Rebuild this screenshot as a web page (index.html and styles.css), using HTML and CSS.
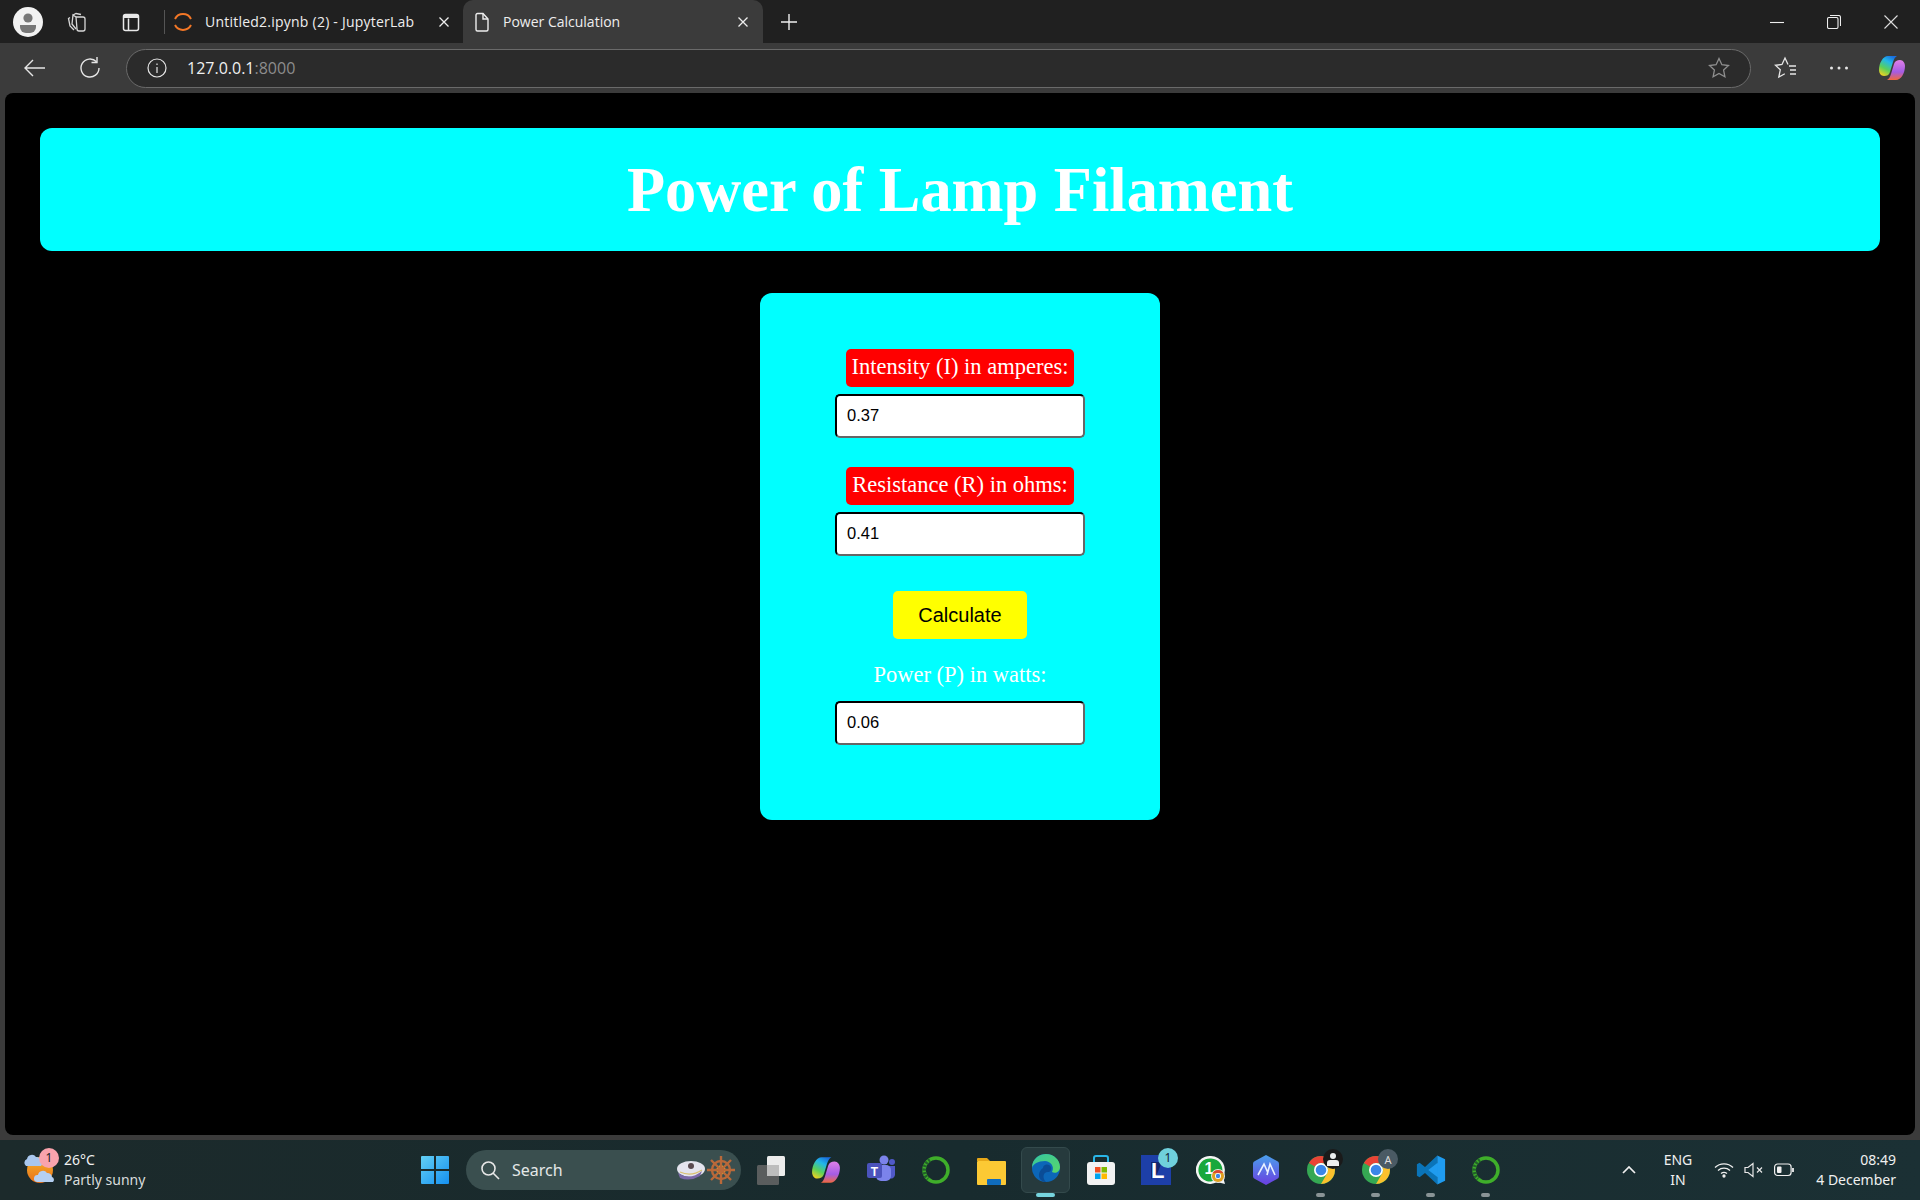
FILE: index.html
```html
<!DOCTYPE html>
<html lang="en">
<head>
<meta charset="utf-8">
<title>Power Calculation</title>
<link rel="stylesheet" href="styles.css">
</head>
<body>
<div class="browser">
  <div class="tabstrip">
    <div class="strip-left">
      <span class="avatar"><svg viewBox="0 0 30 30" width="30" height="30"><circle cx="15" cy="15" r="15" fill="#f2f2f2"/><circle cx="15" cy="11" r="4.6" fill="#777"/><path d="M7 18h16v2a6 6 0 0 1-6 6h-4a6 6 0 0 1-6-6z" fill="#777"/></svg></span>
      <span class="strip-icon"><svg viewBox="0 0 24 24" width="24" height="24" fill="none" stroke="#d8d8d8" stroke-width="1.3"><path d="M11 7h7a2 2 0 0 1 2 2v10a2 2 0 0 1-2 2h-4a2 2 0 0 1-2-2z"/><path d="M8 5l3-1.5 5 1M11 7L8 5l-1 9 4 5M5 7.500l-1.500 1L5 16l4 4"/></svg></span>
      <span class="strip-icon"><svg viewBox="0 0 24 24" width="24" height="24" fill="none" stroke="#e8e8e8" stroke-width="1.500"><rect x="4.500" y="4.500" width="15" height="16" rx="2"/><path d="M9.500 8.500v12"/><path d="M5 5h14v3H5z" fill="#e8e8e8" stroke="none"/></svg></span>
      <span class="strip-sep"></span>
    </div>
    <div class="tab tab-jupyter">
      <svg class="tab-favicon" viewBox="0 0 20 20" width="20" height="20" fill="none" stroke="#f37726" stroke-width="2"><path d="M2 7a9 9 0 0 1 16 0"/><path d="M2 13a9 9 0 0 0 16 0"/></svg>
      <span class="tab-title">Untitled2.ipynb (2) - JupyterLab</span>
      <svg class="tab-close" viewBox="0 0 12 12" width="12" height="12" stroke="#eee" stroke-width="1.300"><path d="M1.500 1.500l9 9M10.500 1.500l-9 9"/></svg>
    </div>
    <div class="tab tab-active">
      <svg class="tab-favicon" viewBox="0 0 20 20" width="20" height="20" fill="none" stroke="#eee" stroke-width="1.400"><path d="M4 3a1.500 1.500 0 0 1 1.500-1.500H11L16 7v10.500A1.500 1.500 0 0 1 14.500 19h-9A1.500 1.500 0 0 1 4 17.500z"/><path d="M11 1.500V7h5"/></svg>
      <span class="tab-title">Power Calculation</span>
      <svg class="tab-close" viewBox="0 0 12 12" width="12" height="12" stroke="#eee" stroke-width="1.300"><path d="M1.500 1.500l9 9M10.500 1.500l-9 9"/></svg>
    </div>
    <span class="newtab"><svg viewBox="0 0 18 18" width="18" height="18" stroke="#eee" stroke-width="1.400"><path d="M9 1v16M1 9h16"/></svg></span>
    <div class="window-controls">
      <svg viewBox="0 0 14 14" width="14" height="14" stroke="#eee" stroke-width="1.100"><path d="M0 7.500h14"/></svg>
      <svg viewBox="0 0 14 14" width="14" height="14" fill="none" stroke="#eee" stroke-width="1.100"><rect x="0.500" y="2.500" width="10.500" height="11" rx="1.500"/><path d="M3 .5h8.500a2 2 0 0 1 2 2V11"/></svg>
      <svg viewBox="0 0 14 14" width="14" height="14" stroke="#ddd" stroke-width="1.100"><path d="M.5.500l13 13M13.500.5l-13 13"/></svg>
    </div>
  </div>
  <div class="toolbar">
    <span class="tool-btn first"><svg viewBox="0 0 24 24" width="24" height="24" fill="none" stroke="#e6e6e6" stroke-width="1.400"><path d="M23 12H3M11 4l-8 8 8 8"/></svg></span>
    <span class="tool-btn"><svg viewBox="0 0 24 24" width="24" height="24" fill="none" stroke="#e6e6e6" stroke-width="1.400"><path d="M18.500 5.800A9 9 0 1 0 21 12"/><path d="M19 1v5.500h-5.500"/></svg></span>
    <div class="addressbar">
      <svg viewBox="0 0 20 20" width="20" height="20" fill="none" stroke="#e6e6e6" stroke-width="1.200"><circle cx="10" cy="10" r="9"/><path d="M10 9v6M10 5.500v1.500"/></svg>
      <span class="url"><span class="url-host">127.0.0.1</span><span class="url-port">:8000</span></span>
      <svg class="addr-star" viewBox="0 0 22 22" width="22" height="22" fill="none" stroke="#8f8f8f" stroke-width="1.300"><path d="M11 1.500l2.900 6.200 6.600.8-4.900 4.600 1.300 6.700-5.900-3.300-5.900 3.300 1.300-6.700L1.500 8.500l6.600-.8z"/></svg>
    </div>
    <span class="tool-right">
      <svg viewBox="0 0 24 24" width="24" height="24" fill="none" stroke="#e6e6e6" stroke-width="1.300"><path d="M15 8.500l-3-6.500-3 6.500-6.500.8 4.800 4.500L5.800 21l6-3.200M16 10h7M17 14h6M17 18h6"/></svg>
      <svg class="dots" viewBox="0 0 20 4" width="20" height="4" fill="#e6e6e6"><circle cx="2.500" cy="2" r="1.500"/><circle cx="10" cy="2" r="1.500"/><circle cx="17.500" cy="2" r="1.500"/></svg>
      <svg viewBox="0 0 28 28" width="28" height="28"><defs><linearGradient id="cpA" x1=".7" y1="0" x2=".2" y2="1"><stop offset="0" stop-color="#1a6fe0"/><stop offset=".3" stop-color="#22b8e8"/><stop offset=".65" stop-color="#5ad05a"/><stop offset="1" stop-color="#f5d020"/></linearGradient><linearGradient id="cpB" x1=".5" y1="0" x2=".5" y2="1"><stop offset="0" stop-color="#e080e8"/><stop offset=".6" stop-color="#a45ce4"/><stop offset="1" stop-color="#f2683c"/></linearGradient></defs><path d="M10 2h9c-2 1-3 3-4 6l-3 10c-1 3-3 4-6 4-3 0-5-3-5-6 0-7 4-14 9-14z" fill="url(#cpA)"/><path d="M18 26H9c2-1 3-3 4-6l3-10c1-3 3-4 6-4 3 0 5 3 5 6 0 7-4 14-9 14z" fill="url(#cpB)"/></svg>
    </span>
  </div>
  <main class="viewport">
    <header class="banner"><h1>Power of Lamp Filament</h1></header>
    <form class="card">
      <label class="field-label" for="intensity">Intensity (I) in amperes:</label>
      <input class="field" id="intensity" type="text" value="0.37">
      <label class="field-label second" for="resistance">Resistance (R) in ohms:</label>
      <input class="field" id="resistance" type="text" value="0.41">
      <button class="calc" type="button">Calculate</button>
      <label class="result-label" for="power">Power (P) in watts:</label>
      <input class="field" id="power" type="text" value="0.06">
    </form>
  </main>
  <footer class="taskbar">
    <div class="weather">
      <span class="weather-icon">
        <svg viewBox="0 0 34 36" width="34" height="36"><defs><linearGradient id="sun" x1="0" y1="0" x2="0" y2="1"><stop offset="0" stop-color="#f7b32a"/><stop offset="1" stop-color="#e8701a"/></linearGradient></defs><circle cx="16" cy="18" r="13" fill="url(#sun)"/><path d="M2 14a4 4 0 0 1 1-7 5 5 0 0 1 9-2 4.500 4.500 0 0 1 5 4.500 3 3 0 0 1 0 4.500z" fill="#a9c7ee"/><path d="M13 30a3.500 3.500 0 0 1 1-7 5 5 0 0 1 9-2 4.500 4.500 0 0 1 5 4 3 3 0 0 1 1 5z" fill="#b5d0f2"/></svg>
        <span class="weather-badge">1</span>
      </span>
      <span class="weather-text"><span class="weather-temp">26°C</span><span class="weather-desc">Partly sunny</span></span>
    </div>
    <div class="task-center">
      <span class="task-item start"><svg viewBox="0 0 30 30" width="30" height="30"><defs><linearGradient id="win" x1="0" y1="0" x2="1" y2="1"><stop offset="0" stop-color="#63d0f5"/><stop offset="1" stop-color="#1590f0"/></linearGradient></defs><path d="M1 2a1 1 0 0 1 1-1h12v13H1zM16 1h12a1 1 0 0 1 1 1v12H16zM1 16h13v13H2a1 1 0 0 1-1-1zM16 16h13v12a1 1 0 0 1-1 1H16z" fill="url(#win)"/></svg></span>
      <div class="searchbox">
        <svg viewBox="0 0 20 20" width="20" height="20" fill="none" stroke="#e8e8e8" stroke-width="1.600"><circle cx="8.500" cy="8.500" r="6.500"/><path d="M13 13l6 6"/></svg>
        <span class="search-text">Search</span>
        <span class="search-art">
          <svg viewBox="0 0 30 22" width="30" height="22"><ellipse cx="15" cy="10" rx="14" ry="8" fill="#e4e4ee"/><path d="M2 14q12 8 24-2l-2 5q-10 6-20 2z" fill="#7a68a8"/><path d="M4 13q11 5 22-2" fill="none" stroke="#d8c070" stroke-width="1.200"/><circle cx="15" cy="7" r="3" fill="#5a4a50"/></svg>
          <svg viewBox="0 0 30 30" width="30" height="30" fill="none" stroke="#b9693a" stroke-width="2.400"><circle cx="15" cy="15" r="9"/><circle cx="15" cy="15" r="3.500" stroke="#d8a030"/><path d="M15 1v28M1 15h28M5 5l20 20M25 5L5 25"/></svg>
        </span>
      </div>
      <span class="task-item"><svg viewBox="0 0 30 30" width="30" height="30"><rect x="11" y="1" width="18" height="20" rx="1.500" fill="#ececec"/><rect x="1" y="10" width="22" height="20" rx="1.500" fill="#666" fill-opacity=".85"/><rect x="11" y="10" width="12" height="11" fill="#bdbdbd"/></svg></span>
      <span class="task-item"><svg viewBox="0 0 28 28" width="30" height="30"><defs><linearGradient id="cpC" x1=".7" y1="0" x2=".2" y2="1"><stop offset="0" stop-color="#1a6fe0"/><stop offset=".3" stop-color="#22b8e8"/><stop offset=".65" stop-color="#5ad05a"/><stop offset="1" stop-color="#f5d020"/></linearGradient><linearGradient id="cpD" x1=".5" y1="0" x2=".5" y2="1"><stop offset="0" stop-color="#e080e8"/><stop offset=".6" stop-color="#a45ce4"/><stop offset="1" stop-color="#f2683c"/></linearGradient></defs><path d="M10 2h9c-2 1-3 3-4 6l-3 10c-1 3-3 4-6 4-3 0-5-3-5-6 0-7 4-14 9-14z" fill="url(#cpC)"/><path d="M18 26H9c2-1 3-3 4-6l3-10c1-3 3-4 6-4 3 0 5 3 5 6 0 7-4 14-9 14z" fill="url(#cpD)"/></svg></span>
      <span class="task-item"><svg viewBox="0 0 30 30" width="30" height="30"><circle cx="18" cy="5" r="4.500" fill="#7b83eb"/><circle cx="26" cy="7" r="3" fill="#5059c9"/><path d="M22 11h7v9a4 4 0 0 1-6 3z" fill="#5059c9"/><rect x="10" y="10" width="15" height="16" rx="5" fill="#7b83eb"/><rect x="1" y="8" width="15" height="15" rx="2" fill="#4b53bc"/><text class="ms-t" x="8.500" y="20.500">T</text></svg></span>
      <span class="task-item"><svg viewBox="0 0 30 30" width="30" height="30" fill="none"><circle cx="15" cy="15" r="12" stroke="#3fae2a" stroke-width="3.500"/><path d="M9 5a12 12 0 0 0-2 19" stroke="#22602a" stroke-width="4" stroke-dasharray="2 1.500"/></svg></span>
      <span class="task-item"><svg viewBox="0 0 30 30" width="30" height="30"><path d="M1 4a1 1 0 0 1 1-1h9l3 3h-13z" fill="#e8a818"/><rect x="1" y="6" width="29" height="24" rx="1" fill="#fcc934"/><rect x="11" y="24" width="14" height="6" rx="1" fill="#0f6cbd"/></svg></span>
      <span class="task-item active-item"><svg viewBox="0 0 30 30" width="30" height="30"><defs><linearGradient id="edg" x1="0" y1="0" x2="1" y2="1"><stop offset="0" stop-color="#35c6a0"/><stop offset="1" stop-color="#58d66a"/></linearGradient></defs><circle cx="15" cy="15" r="14" fill="#0c66b8"/><path d="M1 15C1 5 9 1 15 1c8 0 14 6 14 13 0 5-5 7-8 5 3-6-2-11-7-11C7 8 2 11 1 15z" fill="url(#edg)"/><path d="M12 15c0-4 6-5 8-1 1 3-1 5-3 5-5 0-6 6-2 10-7 0-10-9-3-14z" fill="#0a4c96"/></svg></span>
      <span class="task-item"><svg viewBox="0 0 30 32" width="30" height="32"><rect x="1" y="8" width="28" height="23" rx="3" fill="#f2f2f2"/><path d="M8 8V4a2 2 0 0 1 2-2h10a2 2 0 0 1 2 2v4" fill="none" stroke="#29b6e8" stroke-width="2"/><rect x="9" y="13" width="5.500" height="5.500" fill="#f25022"/><rect x="15.500" y="13" width="5.500" height="5.500" fill="#7fba00"/><rect x="9" y="19.500" width="5.500" height="5.500" fill="#00a4ef"/><rect x="15.500" y="19.500" width="5.500" height="5.500" fill="#ffb900"/></svg></span>
      <span class="task-item"><svg viewBox="0 0 30 30" width="30" height="30"><rect width="30" height="30" fill="#1d3fa8"/><path d="M10 24l6-5 5-12-11 0z" fill="#12266e"/><text class="l-mark" x="10" y="23">L</text></svg><span class="l-badge">1</span></span>
      <span class="task-item"><svg viewBox="0 0 30 30" width="30" height="30"><path d="M15 1a14 14 0 0 1 12 21l2 7-8-2A14 14 0 1 1 15 1z" fill="#f4f4f4"/><path d="M15 3.500a11.500 11.500 0 0 1 10 17l1 5-5-1.500A11.500 11.500 0 1 1 15 3.500z" fill="#19a83c"/><text class="wa-one" x="13" y="19">1</text><circle cx="22" cy="21" r="7" fill="#e8e8e8"/><circle cx="22" cy="21" r="6" fill="#e0a020"/><path d="M16.800 18a6 6 0 0 1 10.400 0H22z" fill="#d94a32"/><circle cx="22" cy="21" r="3" fill="#fff"/><circle cx="22" cy="21" r="2.200" fill="#3a86e8"/></svg></span>
      <span class="task-item"><svg viewBox="0 0 30 32" width="30" height="32"><defs><linearGradient id="arc" x1="0" y1="0" x2="0" y2="1"><stop offset="0" stop-color="#4aa0ec"/><stop offset="1" stop-color="#6a3ee0"/></linearGradient></defs><path d="M15 1l11 6a3 3 0 0 1 2 3v12a3 3 0 0 1-2 3l-11 6-11-6a3 3 0 0 1-2-3V10a3 3 0 0 1 2-3z" fill="url(#arc)"/><path d="M7 21l6-11 4 9M16 21l3-11 5 11" fill="none" stroke="#e8f0ff" stroke-width="1.600"/></svg></span>
      <span class="task-item with-dot"><svg viewBox="0 0 30 30" width="30" height="30"><circle cx="15" cy="15" r="14" fill="#35a853"/><path d="M15 1a14 14 0 0 1 12.100 7H15a7 7 0 0 0-6.100 3.500L2.900 8A14 14 0 0 1 15 1z" fill="#ea4335"/><path d="M27.100 8A14 14 0 0 1 15 29l6.100-10.500A7 7 0 0 0 15 8z" fill="#fbc02d"/><circle cx="15" cy="15" r="7" fill="#fff"/><circle cx="15" cy="15" r="5.300" fill="#3a86e8"/></svg><span class="chrome-badge dark"><svg viewBox="0 0 12 14" width="12" height="14" fill="#eee"><circle cx="6" cy="4" r="3"/><path d="M0 14V11a3 3 0 0 1 3-3h6a3 3 0 0 1 3 3v3z"/></svg></span></span>
      <span class="task-item with-dot"><svg viewBox="0 0 30 30" width="30" height="30"><circle cx="15" cy="15" r="14" fill="#35a853"/><path d="M15 1a14 14 0 0 1 12.100 7H15a7 7 0 0 0-6.100 3.500L2.900 8A14 14 0 0 1 15 1z" fill="#ea4335"/><path d="M27.100 8A14 14 0 0 1 15 29l6.100-10.500A7 7 0 0 0 15 8z" fill="#fbc02d"/><circle cx="15" cy="15" r="7" fill="#fff"/><circle cx="15" cy="15" r="5.300" fill="#3a86e8"/></svg><span class="chrome-badge slate">A</span></span>
      <span class="task-item with-dot"><svg viewBox="0 0 100 100" width="30" height="30"><path d="M71 2L30 40 12 26 3 31v38l9 5 18-14 41 38z" fill="#0a74b8"/><path d="M71 2l26 12v72L71 98zM71 27L41 50l30 23z" fill="#1f9cf0" fill-rule="evenodd"/></svg></span>
      <span class="task-item with-dot"><svg viewBox="0 0 30 30" width="30" height="30" fill="none"><circle cx="15" cy="15" r="12" stroke="#3fae2a" stroke-width="3.500"/><path d="M9 5a12 12 0 0 0-2 19" stroke="#22602a" stroke-width="4" stroke-dasharray="2 1.500"/></svg></span>
    </div>
    <div class="tray">
      <svg class="chevron" viewBox="0 0 14 8" width="14" height="8" fill="none" stroke="#f0f0f0" stroke-width="1.700"><path d="M1 7l6-6 6 6"/></svg>
      <span class="lang"><span>ENG</span><span>IN</span></span>
      <span class="tray-icons">
        <svg viewBox="0 0 20 16" width="20" height="16" fill="none" stroke="#f0f0f0" stroke-width="1.300"><path d="M1 5.500a13 13 0 0 1 18 0M4 8.500a9 9 0 0 1 12 0M7 11.500a5 5 0 0 1 6 0"/><circle cx="10" cy="14" r="1" fill="#f0f0f0"/></svg>
        <svg viewBox="0 0 20 16" width="20" height="16" fill="none" stroke="#e8e8e8" stroke-width="1.200"><path d="M1 5.500h3l5-4v13l-5-4H1z"/><path d="M13 5.500l5 5M18 5.500l-5 5"/></svg>
        <svg viewBox="0 0 20 14" width="20" height="14" fill="none" stroke="#f0f0f0" stroke-width="1.200"><rect x=".6" y="1" width="16.500" height="11.500" rx="3"/><rect x="3" y="3.500" width="4.500" height="6.500" rx="1" fill="#f0f0f0" stroke="none"/><path d="M19 5v4" stroke-width="1.800"/></svg>
      </span>
      <span class="clock"><span>08:49</span><span>4 December</span></span>
    </div>
  </footer>
</div>
</body>
</html>
```

FILE: styles.css
```css
* { box-sizing: border-box; }
html, body { margin: 0; height: 100%; }
body { background: #000; overflow: hidden; font-family: "Noto Sans", "Open Sans", sans-serif; }
.browser { width: 1920px; height: 1200px; display: flex; flex-direction: column; background: #3b3b3b; }

.tabstrip { height: 43px; flex: none; background: #202020; display: flex; align-items: stretch; color: #eee; font-size: 14px; }
.strip-left { display: flex; align-items: center; width: 165px; flex: none; padding-left: 13px; }
.avatar { width: 30px; height: 30px; margin-right: 22px; display: flex; }
.strip-icon { width: 24px; height: 24px; margin-right: 30px; display: flex; }
.strip-icon + .strip-icon { margin-right: 21px; }
.strip-sep { width: 1px; height: 24px; background: #555; }
.tab { display: flex; align-items: center; flex: none; }
.tab-jupyter { width: 298px; padding: 0 10px 0 8px; }
.tab-favicon { flex: none; }
.tab-jupyter .tab-favicon { margin-right: 12px; }
.tab-active .tab-favicon { margin-right: 11px; }
.tab-title { flex: 1; white-space: nowrap; overflow: hidden; font-family: "Open Sans", "Noto Sans", sans-serif; font-size: 14px; }
.tab-jupyter .tab-title { letter-spacing: 0.23px; }
.tab-close { flex: none; margin-right: 3px; }
.tab-active { width: 300px; padding: 0 11px 0 9px; background: #3b3b3b; border-radius: 10px 10px 0 0; }
.newtab { width: 52px; display: flex; align-items: center; justify-content: center; flex: none; }
.window-controls { margin-left: auto; display: flex; align-items: center; gap: 43px; padding-right: 22px; }

.toolbar { height: 50px; flex: none; display: flex; align-items: center; background: #3b3b3b; }
.tool-btn { width: 24px; height: 24px; display: flex; margin-left: 32px; flex: none; }
.tool-btn.first { margin-left: 22px; }
.addressbar { width: 1625px; height: 39px; margin-left: 24px; flex: none; border: 1px solid #6a6a6a; border-radius: 20px; background: #2b2b2b; display: flex; align-items: center; padding: 0 20px 0 20px; }
.url { font-family: "Open Sans", "Noto Sans", sans-serif; font-size: 16px; margin-left: 20px; }
.url-host { color: #f0f0f0; }
.url-port { color: #8d8d8d; }
.addr-star { margin-left: auto; }
.tool-right { display: flex; align-items: center; margin-left: 22px; flex: none; }
.dots { margin-left: 32px; margin-right: 29px; }

.viewport { flex: 1; margin: 0 5px 5px; background: #000; border-radius: 8px; padding: 35px 35px 0; display: flex; flex-direction: column; align-items: center; min-height: 0; }
.banner { align-self: stretch; height: 123px; background: #0ff; border-radius: 12px; display: flex; align-items: center; justify-content: center; }
.banner h1 { margin: 0; font-family: "Liberation Serif", serif; font-weight: 700; font-size: 62.400px; color: #fff; }

.card { width: 400px; height: 527px; margin-top: 42px; background: #0ff; border-radius: 12px; padding-top: 56px; display: flex; flex-direction: column; align-items: center; font-family: "Liberation Serif", serif; }
.field-label { background: #f00; color: #fff; font-size: 22.500px; height: 38px; line-height: 36px; padding: 0 6px; border-radius: 5px; }
.field-label.second { margin-top: 29px; }
.field { width: 250px; height: 44px; margin-top: 7px; border-width: 2px; border-style: inset; border-color: #222 #666 #666 #222; border-radius: 5px; background: #fff; padding: 0 10px 2px; font-family: "Liberation Sans", sans-serif; font-size: 16.500px; color: #000; }
.calc { width: 134px; height: 48px; margin-top: 35px; border: 0; border-radius: 5px; background: #ff0; font-family: "Liberation Sans", sans-serif; font-size: 20px; color: #000; padding: 0; }
.result-label { color: #fff; font-size: 22.500px; line-height: 38px; margin-top: 17px; }
.result-label + .field { margin-top: 7px; }

.taskbar { height: 60px; flex: none; background: linear-gradient(90deg, #1c2a2b, #182b2e 50%, #1b3034); display: flex; align-items: center; position: relative; color: #f0f0f0; }
.weather { display: flex; align-items: center; margin-left: 24px; width: 180px; flex: none; }
.weather-icon { width: 36px; height: 36px; position: relative; display: flex; flex: none; }
.weather-badge { position: absolute; left: 15px; top: -4px; width: 20px; height: 20px; border-radius: 50%; background: #f9a3ad; color: #222; font-size: 12px; line-height: 20px; text-align: center; }
.weather-text { display: flex; flex-direction: column; margin-left: 4px; font-size: 14px; line-height: 20px; }
.weather-desc { color: #d8dcdc; }
.task-center { position: absolute; left: 407px; top: 0; height: 60px; display: flex; align-items: center; }
.task-item { width: 55px; height: 60px; display: flex; align-items: center; justify-content: center; flex: none; position: relative; }
.searchbox { width: 275px; height: 40px; margin: 0 2px 0 4px; border-radius: 20px; background: #3a4f4f; display: flex; align-items: center; padding: 0 0 0 14px; flex: none; }
.search-text { margin-left: 12px; font-size: 16px; color: #e4e8e8; }
.search-art { margin-left: auto; margin-right: 5px; display: flex; align-items: center; }
.active-item::before { content: ""; position: absolute; left: 3px; right: 3px; top: 7px; bottom: 7px; border-radius: 6px; background: #263a3d; border: 1px solid #344a4c; }
.active-item svg { position: relative; margin-top: -4px; }
.active-item::after { content: ""; position: absolute; left: 18px; right: 18px; bottom: 3px; height: 4px; border-radius: 2px; background: #76d4de; }
.with-dot::after { content: ""; position: absolute; left: 23px; right: 23px; bottom: 3px; height: 4px; border-radius: 2px; background: #8a9496; }
.l-badge { position: absolute; right: 5px; top: 8px; width: 20px; height: 20px; border-radius: 50%; background: #6fd0dc; color: #123; font-size: 12px; line-height: 20px; text-align: center; }
.chrome-badge { position: absolute; right: 5px; top: 9px; width: 20px; height: 20px; border-radius: 50%; display: flex; align-items: center; justify-content: center; font-size: 11px; }
.chrome-badge.dark { background: #1a1a1a; }
.chrome-badge.slate { background: #4a5a64; color: #ddd; }
.ms-t { font-family: "Liberation Sans", sans-serif; font-size: 12px; font-weight: 700; fill: #fff; text-anchor: middle; }
.l-mark { font-family: "Liberation Sans", sans-serif; font-size: 22px; font-weight: 700; fill: #fff; }
.wa-one { font-family: "Liberation Sans", sans-serif; font-size: 16px; font-weight: 700; fill: #fff; text-anchor: middle; }
.tray { margin-left: auto; display: flex; align-items: center; padding-right: 24px; font-size: 14px; }
.chevron { margin-right: 27px; }
.lang { display: flex; flex-direction: column; align-items: center; line-height: 20px; width: 30px; margin-right: 21px; }
.tray-icons { display: flex; align-items: center; gap: 10px; }
.clock { display: flex; flex-direction: column; align-items: flex-end; width: 100px; line-height: 20px; margin-left: 2px; }
```
